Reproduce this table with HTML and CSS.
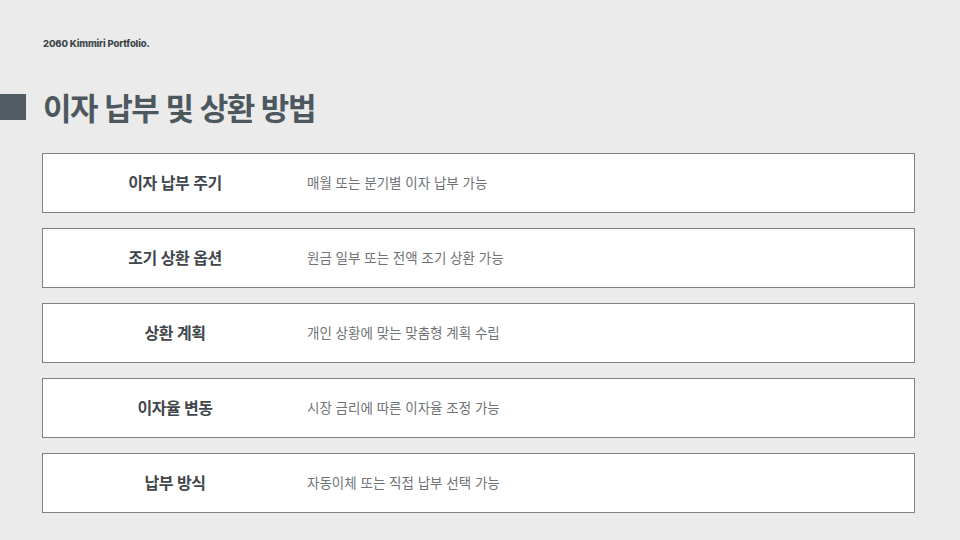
FILE: index.html
```html
<!DOCTYPE html>
<html lang="ko">
<head>
<meta charset="utf-8">
<link rel="stylesheet" href="styles.css">
</head>
<body>
<div class="page">
  <div class="brand">2060 Kimmiri Portfolio.</div>
  <div class="title-row">
    <span class="title-mark"></span>
    <h1 class="title">이자 납부 및 상환 방법</h1>
  </div>
  <div class="list">
    <div class="card"><div class="label">이자 납부 주기</div><div class="desc">매월 또는 분기별 이자 납부 가능</div></div>
    <div class="card"><div class="label">조기 상환 옵션</div><div class="desc">원금 일부 또는 전액 조기 상환 가능</div></div>
    <div class="card"><div class="label">상환 계획</div><div class="desc">개인 상황에 맞는 맞춤형 계획 수립</div></div>
    <div class="card"><div class="label">이자율 변동</div><div class="desc">시장 금리에 따른 이자율 조정 가능</div></div>
    <div class="card"><div class="label">납부 방식</div><div class="desc">자동이체 또는 직접 납부 선택 가능</div></div>
  </div>
</div>
</body>
</html>
```
FILE: styles.css
```css
* { box-sizing: border-box; }
html, body { margin: 0; padding: 0; }
body {
  width: 960px;
  height: 540px;
  background: #ebebeb;
  font-family: "Noto Sans CJK KR", "Noto Sans", sans-serif;
  overflow: hidden;
}
.page {
  padding: 37px 45px 0 0;
}
.brand {
  margin-left: 43px;
  font-family: Inter, "Noto Sans", sans-serif;
  font-weight: 800;
  font-size: 9.5px;
  line-height: 14px;
  color: #3f474c;
  letter-spacing: -0.15px;
}
.title-row {
  display: flex;
  align-items: center;
  gap: 17px;
  margin-top: 36px;
  height: 40px;
}
.title-mark {
  width: 26px;
  height: 26px;
  background: #515c62;
  flex: none;
}
.title {
  margin: 0;
  font-size: 31px;
  font-weight: 700;
  line-height: 40px;
  color: #4d585e;
  letter-spacing: -1.5px;
}
.list {
  margin: 26px 0 0 42px;
  display: flex;
  flex-direction: column;
  gap: 15px;
}
.card {
  height: 60px;
  padding-bottom: 3px;
  background: #fff;
  border: 1px solid #7d8285;
  display: flex;
  align-items: center;
}
.label {
  width: 264px;
  text-align: center;
  font-size: 16px;
  font-weight: 700;
  color: #3f474c;
  letter-spacing: -0.5px;
}
.desc {
  font-size: 13.5px;
  color: #6e7377;
  letter-spacing: 0px;
}
```
